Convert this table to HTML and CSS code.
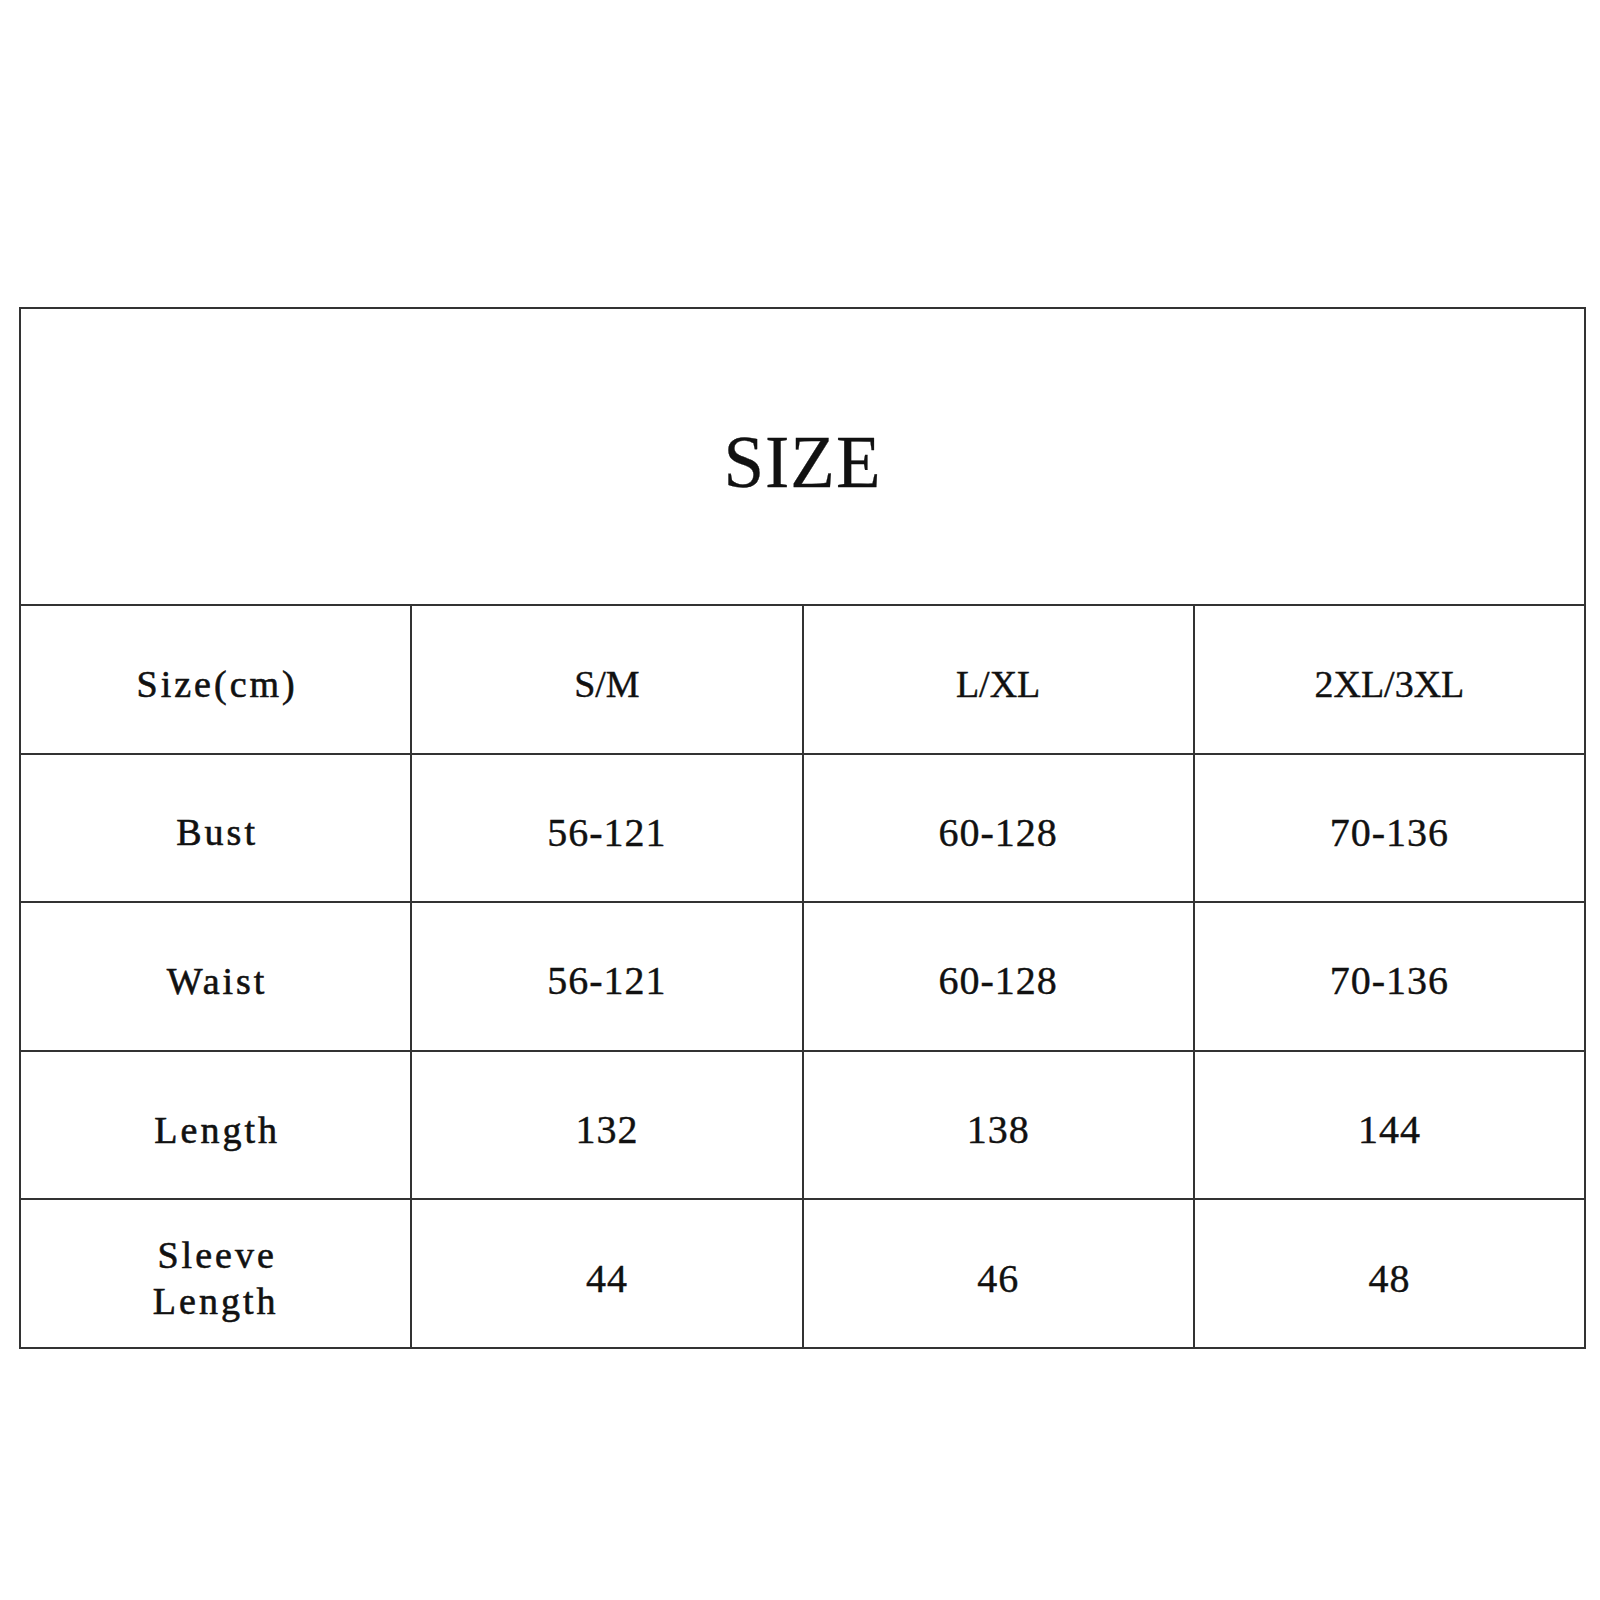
FILE: index.html
```html
<!DOCTYPE html>
<html>
<head>
<meta charset="utf-8">
<link rel="stylesheet" href="styles.css">
</head>
<body>
<table class="size-table">
  <colgroup><col><col><col><col></colgroup>
  <tr class="title-row"><td colspan="4" class="title">SIZE</td></tr>
  <tr class="row"><td class="label">Size(cm)</td><td class="head">S/M</td><td class="head">L/XL</td><td class="head">2XL/3XL</td></tr>
  <tr class="row"><td class="label">Bust</td><td class="num">56-121</td><td class="num">60-128</td><td class="num">70-136</td></tr>
  <tr class="row"><td class="label">Waist</td><td class="num">56-121</td><td class="num">60-128</td><td class="num">70-136</td></tr>
  <tr class="row"><td class="label">Length</td><td class="num">132</td><td class="num">138</td><td class="num">144</td></tr>
  <tr class="row"><td class="label">Sleeve<br>Length</td><td class="num">44</td><td class="num">46</td><td class="num">48</td></tr>
</table>
</body>
</html>
```

FILE: styles.css
```css
html, body {
  margin: 0;
  padding: 0;
  background: #ffffff;
}

body {
  padding-top: 307px;
  padding-left: 19px;
}

.size-table {
  width: 1567px;
  border-collapse: collapse;
  table-layout: fixed;
  color: #111;
}

.size-table td {
  border: 2px solid #333;
  text-align: center;
  vertical-align: middle;
  padding: 0;
}

.title-row {
  height: 297px;
}

.title {
  font-family: "Liberation Serif", "Times New Roman", serif;
  font-size: 73px;
  letter-spacing: 1px;
  padding-top: 12px !important;
  -webkit-text-stroke: 0.3px #111;
}

.row {
  height: 148.6px;
}

.row td {
  padding-top: 9px;
}

.label {
  font-family: "Liberation Serif", "Times New Roman", serif;
  font-size: 38px;
  letter-spacing: 3px;
  line-height: 46px;
  -webkit-text-stroke: 0.6px #111;
  text-indent: 3px;
}

.head {
  font-family: "Liberation Serif", "Times New Roman", serif;
  font-size: 38px;
  -webkit-text-stroke: 0.4px #111;
}

.num {
  font-family: "Liberation Serif", "Times New Roman", serif;
  font-size: 40px;
  letter-spacing: 1px;
  -webkit-text-stroke: 0.4px #111;
}
```
